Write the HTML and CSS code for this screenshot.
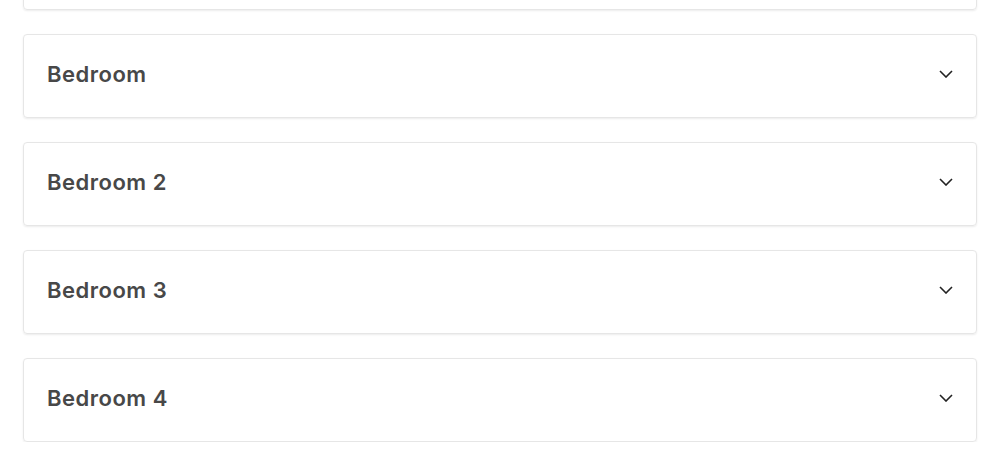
FILE: index.html
```html
<!DOCTYPE html>
<html>
<head>
<meta charset="utf-8">
<link rel="stylesheet" href="styles.css">
</head>
<body>
<div class="list">
  <div class="card"></div>
  <div class="card"><span class="title">Bedroom</span><svg class="chev" viewBox="0 0 14 8" width="14" height="8"><path d="M1 1l6 6 6-6" fill="none" stroke="#222" stroke-width="1.6"/></svg></div>
  <div class="card"><span class="title">Bedroom 2</span><svg class="chev" viewBox="0 0 14 8" width="14" height="8"><path d="M1 1l6 6 6-6" fill="none" stroke="#222" stroke-width="1.6"/></svg></div>
  <div class="card"><span class="title">Bedroom 3</span><svg class="chev" viewBox="0 0 14 8" width="14" height="8"><path d="M1 1l6 6 6-6" fill="none" stroke="#222" stroke-width="1.6"/></svg></div>
  <div class="card"><span class="title">Bedroom 4</span><svg class="chev" viewBox="0 0 14 8" width="14" height="8"><path d="M1 1l6 6 6-6" fill="none" stroke="#222" stroke-width="1.6"/></svg></div>
</div>
</body>
</html>
```
FILE: styles.css
```css
html, body {
  margin: 0;
  background: #fff;
}
.list {
  margin-top: -74px;
  padding: 0 21px 0 23px;
  display: flex;
  flex-direction: column;
  gap: 24px;
}
.card {
  box-sizing: border-box;
  height: 84px;
  border: 1px solid #e6e6e6;
  border-radius: 4px;
  box-shadow: 0 1px 2px rgba(0,0,0,0.08);
  padding: 0 23px 5px 23px;
  display: flex;
  align-items: center;
  justify-content: space-between;
}
.title {
  font-family: "Inter", "Noto Sans", sans-serif;
  font-weight: 600;
  font-size: 22px;
  color: #484848;
  letter-spacing: 0.5px;
}
.chev {
  display: block;
}
```
